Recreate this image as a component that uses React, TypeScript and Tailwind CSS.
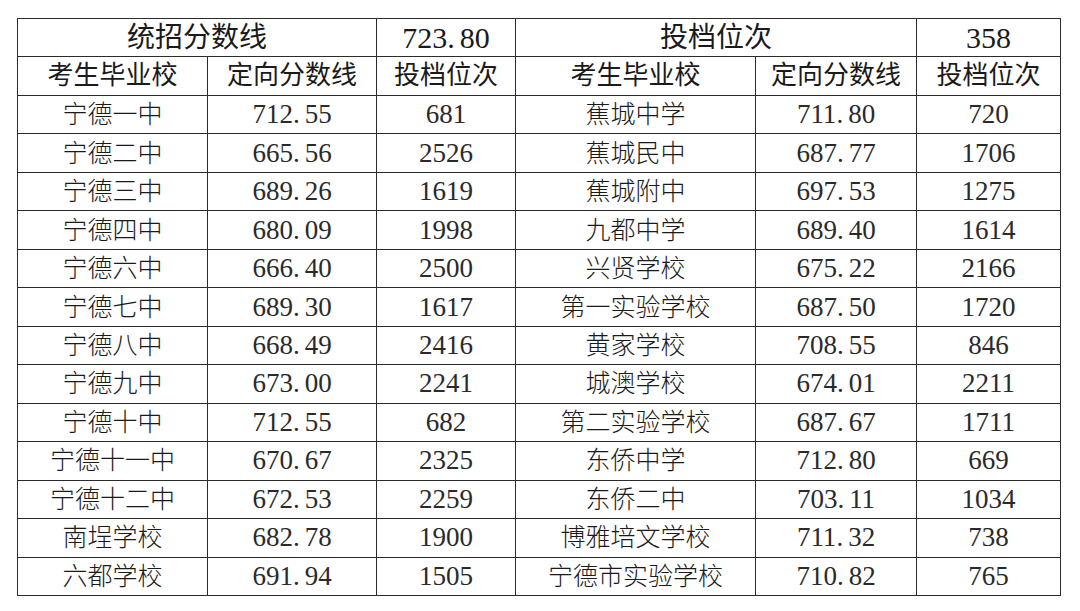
import React from 'react';

const left = [
  ['宁德一中', '712.55', '681'],
  ['宁德二中', '665.56', '2526'],
  ['宁德三中', '689.26', '1619'],
  ['宁德四中', '680.09', '1998'],
  ['宁德六中', '666.40', '2500'],
  ['宁德七中', '689.30', '1617'],
  ['宁德八中', '668.49', '2416'],
  ['宁德九中', '673.00', '2241'],
  ['宁德十中', '712.55', '682'],
  ['宁德十一中', '670.67', '2325'],
  ['宁德十二中', '672.53', '2259'],
  ['南埕学校', '682.78', '1900'],
  ['六都学校', '691.94', '1505'],
];

const right = [
  ['蕉城中学', '711.80', '720'],
  ['蕉城民中', '687.77', '1706'],
  ['蕉城附中', '697.53', '1275'],
  ['九都中学', '689.40', '1614'],
  ['兴贤学校', '675.22', '2166'],
  ['第一实验学校', '687.50', '1720'],
  ['黄家学校', '708.55', '846'],
  ['城澳学校', '674.01', '2211'],
  ['第二实验学校', '687.67', '1711'],
  ['东侨中学', '712.80', '669'],
  ['东侨二中', '703.11', '1034'],
  ['博雅培文学校', '711.32', '738'],
  ['宁德市实验学校', '710.82', '765'],
];

const cell = 'flex items-center justify-center border-r border-b border-[#2b2b2b] leading-none whitespace-nowrap';
const name = cell + ' text-[25px] font-light text-[#1a1a1a]';
const num = cell + ' text-[27px] text-[#2a2a2a]';

// SimSun-style half-width period leaves a gap after the dot
const Num = ({ v }: { v: string }) => {
  const [a, b] = v.split('.');
  if (b === undefined) return <>{v}</>;
  return (
    <>
      {a}.<span className="ml-[5px]">{b}</span>
    </>
  );
};

export default function App() {
  return (
    <div className="w-[1080px] h-[611px] bg-white overflow-hidden text-[#1a1a1a]" style={{ fontFamily: '"Liberation Serif", "Noto Sans CJK SC", serif' }}>
      <div className="ml-[17px] mt-[18px] w-[1044px] grid grid-cols-[190px_169px_139px_240px_161px_144px] auto-rows-[38.47px] border-l border-t border-[#2b2b2b]">
        {/* top header */}
        <div className={cell + ' col-span-2 text-[28px]'}>统招分数线</div>
        <div className={cell + ' text-[30px]'}><Num v="723.80" /></div>
        <div className={cell + ' col-span-2 text-[28px]'}>投档位次</div>
        <div className={cell + ' text-[30px]'}>358</div>

        {/* column headers */}
        {['考生毕业校', '定向分数线', '投档位次', '考生毕业校', '定向分数线', '投档位次'].map((h, i) => (
          <div key={i} className={cell + ' text-[26px]'}>{h}</div>
        ))}

        {left.map((row, i) => (
          <React.Fragment key={i}>
            <div className={name}>{row[0]}</div>
            <div className={num}><Num v={row[1]} /></div>
            <div className={num}>{row[2]}</div>
            <div className={name}>{right[i][0]}</div>
            <div className={num}><Num v={right[i][1]} /></div>
            <div className={num}>{right[i][2]}</div>
          </React.Fragment>
        ))}
      </div>
    </div>
  );
}
